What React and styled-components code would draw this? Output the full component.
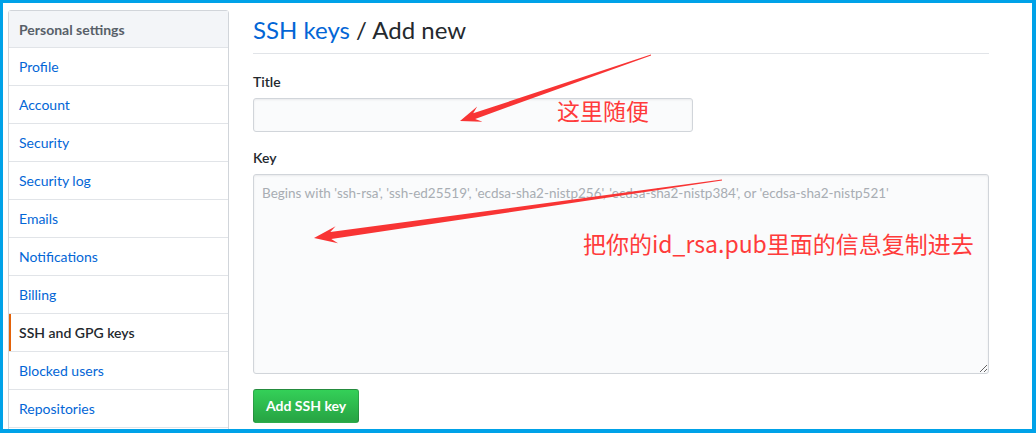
import styled, { createGlobalStyle } from "styled-components";

const GlobalStyle = createGlobalStyle`
    html, body {
        margin: 0;
        padding: 0;
        overflow: hidden;
        background: #fff;
    }
    body {
        font-family: "Lato", "Liberation Sans", sans-serif;
        font-size: 14px;
        color: #24292e;
    }
`;

const Screen = styled.div`
    position: relative;
    width: 1036px;
    height: 433px;
`;

const Frame = styled.div`
    box-sizing: border-box;
    width: 100%;
    height: 100%;
    border-style: solid;
    border-color: #00a2e8;
    border-width: 3px 4px 4px 3px;
    padding: 7px 0 0 5px;
    display: flex;
    gap: 24px;
    overflow: hidden;
`;

const Menu = styled.nav`
    flex: 0 0 221px;
    box-sizing: border-box;
    border: 1px solid #d1d5da;
    border-radius: 3px;
    align-self: flex-start;
    padding-bottom: 12px;
`;

const MenuHead = styled.div`
    padding: 8px 10px 7px;
    line-height: 21px;
    background: #f3f5f8;
    color: #586069;
    font-weight: 700;
    border-bottom: 1px solid #e1e4e8;
`;

const MenuItem = styled.a`
    display: block;
    padding: 8px 10px;
    line-height: 21px;
    color: ${(props) => (props.selected ? "#24292e" : "#0366d6")};
    font-weight: ${(props) => (props.selected ? 600 : 400)};
    text-decoration: none;
    border-bottom: 1px solid #e1e4e8;
    box-shadow: ${(props) => (props.selected ? "inset 2px 0 0 #e36209" : "none")};
`;

const Main = styled.main`
    width: 736px;
    padding-top: 5px;
`;

const Subhead = styled.div`
    padding-bottom: 8px;
    border-bottom: 1px solid #e1e4e8;
    margin-bottom: 18px;
`;

const Heading = styled.h2`
    margin: 0;
    font-size: 24px;
    font-weight: 400;
    line-height: 30px;
    color: #24292e;
`;

const Crumb = styled.a`
    color: #0366d6;
    text-decoration: none;
`;

const Group = styled.div`
    margin-bottom: 16px;
`;

const Label = styled.label`
    display: block;
    font-weight: 600;
    line-height: 20px;
    margin-bottom: 6px;
`;

const Input = styled.input`
    box-sizing: border-box;
    width: ${(props) => props.width || "100%"};
    height: 34px;
    padding: 6px 8px;
    font: inherit;
    background: #fafbfc;
    border: 1px solid #d1d5da;
    border-radius: 3px;
    box-shadow: inset 0 1px 2px rgba(27, 31, 35, 0.075);
    outline: none;
`;

const TextArea = styled.textarea`
    box-sizing: border-box;
    display: block;
    width: 100%;
    height: 200px;
    padding: 8px;
    font: inherit;
    font-size: 13.5px;
    line-height: 20px;
    background: #fafbfc;
    border: 1px solid #d1d5da;
    border-radius: 3px;
    box-shadow: inset 0 1px 2px rgba(27, 31, 35, 0.075);
    outline: none;

    &::placeholder {
        color: #a8adb3;
    }
`;

const Button = styled.button`
    margin-top: -1px;
    padding: 6px 12px;
    font: inherit;
    font-weight: 700;
    line-height: 20px;
    color: #fff;
    background-image: linear-gradient(-180deg, #34d058 0%, #28a745 90%);
    border: 1px solid rgba(27, 31, 35, 0.2);
    border-radius: 3px;
`;

const Overlay = styled.svg`
    position: absolute;
    top: 0;
    left: 0;
    pointer-events: none;
`;

const Note = styled.div`
    position: absolute;
    left: ${(props) => props.x}px;
    top: ${(props) => props.y}px;
    font-family: "Noto Sans CJK SC", sans-serif;
    font-size: 23px;
    line-height: 23px;
    color: #ff3b3b;
    white-space: nowrap;
    pointer-events: none;
`;

// tapered annotation arrow, thin at the tail and barbed at the tip
const arrowPoints = (x1, y1, x2, y2, shaft, head, len) => {
    const dx = x2 - x1;
    const dy = y2 - y1;
    const d = Math.hypot(dx, dy);
    const ux = dx / d;
    const uy = dy / d;
    const nx = -uy;
    const ny = ux;
    const bx = x2 - ux * len;
    const by = y2 - uy * len;
    const sx = bx + ux * 3;
    const sy = by + uy * 3;
    const pts = [
        [x1 + nx * 0.4, y1 + ny * 0.4],
        [sx + nx * shaft, sy + ny * shaft],
        [bx - ux * 3 + nx * head, by - uy * 3 + ny * head],
        [x2, y2],
        [bx - ux * 3 - nx * head, by - uy * 3 - ny * head],
        [sx - nx * shaft, sy - ny * shaft],
        [x1 - nx * 0.4, y1 - ny * 0.4],
    ];
    return pts.map((p) => p.map((v) => v.toFixed(1)).join(",")).join(" ");
};

const items = [
    "Profile",
    "Account",
    "Security",
    "Security log",
    "Emails",
    "Notifications",
    "Billing",
    "SSH and GPG keys",
    "Blocked users",
    "Repositories",
];

const App = () => {
    return (
        <Screen>
            <GlobalStyle />
            <Frame>
                <Menu>
                    <MenuHead>Personal settings</MenuHead>
                    {items.map((item) => (
                        <MenuItem key={item} selected={item === "SSH and GPG keys"}>
                            {item}
                        </MenuItem>
                    ))}
                </Menu>
                <Main>
                    <Subhead>
                        <Heading>
                            <Crumb>SSH keys</Crumb> / Add new
                        </Heading>
                    </Subhead>
                    <Group>
                        <Label>Title</Label>
                        <Input width="440px" />
                    </Group>
                    <Group>
                        <Label>Key</Label>
                        <TextArea placeholder="Begins with 'ssh-rsa', 'ssh-ed25519', 'ecdsa-sha2-nistp256', 'ecdsa-sha2-nistp384', or 'ecdsa-sha2-nistp521'" />
                    </Group>
                    <Button>Add SSH key</Button>
                </Main>
            </Frame>
            <Overlay width="1036" height="433">
                <polygon points={arrowPoints(651, 55, 460, 121, 3, 8, 18)} fill="#f83434" />
                <polygon points={arrowPoints(722, 180, 314, 238, 3.5, 8.5, 20)} fill="#f83434" />
            </Overlay>
            <Note x={557} y={99}>这里随便</Note>
            <Note x={583} y={232}>把你的id_rsa.pub里面的信息复制进去</Note>
        </Screen>
    );
};

export default App;
